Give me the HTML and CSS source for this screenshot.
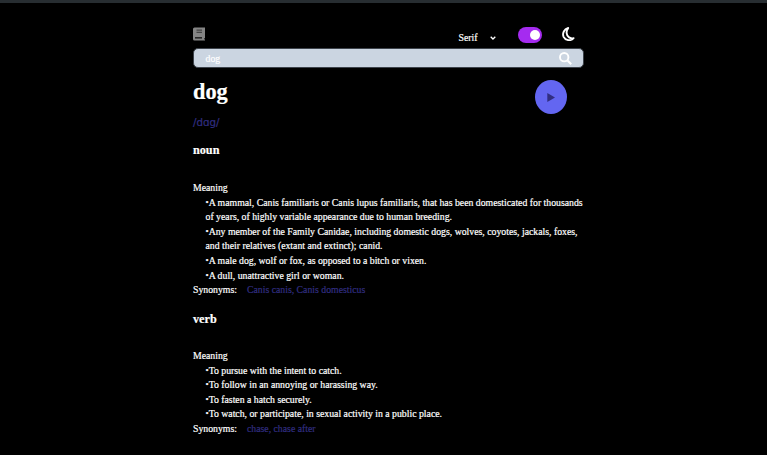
FILE: index.html
```html
<!DOCTYPE html>
<html lang="en">
<head>
<meta charset="utf-8">
<title>Dictionary</title>
<link rel="stylesheet" href="styles.css">
</head>
<body>
<main class="page">
  <header class="header">
    <svg class="book" viewBox="0 0 12 14"><path fill="#858585" d="M1.500.5H12v10.600h-.6v1.400h.6v1H1.500Q0 13.500 0 12V2Q0 .5 1.500.5z"/><path fill="#454545" d="M3.500 2.500h5.500v1.300H3.500zM3.500 4.700h5.500v1.300H3.500z"/><path fill="#111" d="M2 10.200h7v1.300H2z"/></svg>
    <div class="controls">
      <span class="font-name">Serif</span>
      <svg class="chevron" viewBox="0 0 6 4"><path d="M.7.7 3 3 5.300.7" fill="none" stroke="#fff" stroke-width="1.300"/></svg>
      <span class="toggle"><span class="knob"></span></span>
      <svg class="moon" viewBox="0 0 13 14"><path d="M6.200 1C3.700 3.800 4.300 8.600 7 10.400c1.500 1 3 1.200 4.600.7C8.700 14.500 3.300 13.400 1.600 9.800.1 6.300 2.100 2 6.200 1z" fill="none" stroke="#fff" stroke-width="1.900" stroke-linejoin="round"/></svg>
    </div>
  </header>
  <div class="search">
    <span>dog</span>
    <svg class="magnifier" viewBox="0 0 13 13"><circle cx="5.200" cy="5.200" r="4.200" fill="none" stroke="#fff" stroke-width="1.900"/><path d="m8.300 8.300 3.900 3.900" stroke="#fff" stroke-width="2.100"/></svg>
  </div>
  <section class="entry">
    <div>
      <h1 class="word">dog</h1>
      <p class="phonetic">/dɑg/</p>
    </div>
    <div class="play"><svg viewBox="0 0 8 9"><path d="M.3 0v9L8 4.500z" fill="#312e81"/></svg></div>
  </section>
  <section class="part">
    <h2 class="kind">noun</h2>
    <p class="label">Meaning</p>
    <ul class="meanings">
      <li><span class="line">A mammal, Canis familiaris or Canis lupus familiaris, that has been domesticated for thousands</span><span class="line cont">of years, of highly variable appearance due to human breeding.</span></li>
      <li><span class="line">Any member of the Family Canidae, including domestic dogs, wolves, coyotes, jackals, foxes,</span><span class="line cont">and their relatives (extant and extinct); canid.</span></li>
      <li><span class="line">A male dog, wolf or fox, as opposed to a bitch or vixen.</span></li>
      <li><span class="line">A dull, unattractive girl or woman.</span></li>
    </ul>
    <p class="synonyms"><span>Synonyms:</span><span class="links">Canis canis, Canis domesticus</span></p>
  </section>
  <section class="part">
    <h2 class="kind">verb</h2>
    <p class="label">Meaning</p>
    <ul class="meanings">
      <li><span class="line">To pursue with the intent to catch.</span></li>
      <li><span class="line">To follow in an annoying or harassing way.</span></li>
      <li><span class="line">To fasten a hatch securely.</span></li>
      <li><span class="line">To watch, or participate, in sexual activity in a public place.</span></li>
    </ul>
    <p class="synonyms"><span>Synonyms:</span><span class="links">chase, chase after</span></p>
  </section>
</main>
</body>
</html>
```
FILE: styles.css
```css
* { box-sizing: border-box; margin: 0; padding: 0; }
html { background: #000; overflow: hidden; }
body { background: #000; color: #fff; border-top: 3px solid #272d31; font: 9.780px/14.600px "Liberation Serif", serif; -webkit-text-stroke: .2px; height: 455px; overflow: hidden; }
svg { display: block; flex: none; }
.page { width: 391px; margin-left: 193px; padding-top: 22px; }
.header { display: flex; justify-content: space-between; height: 24px; padding: 2px 9px 0 0; }
.book { width: 12px; height: 14px; }
.controls { display: flex; align-items: flex-start; }
.font-name { width: 31.500px; padding-top: 4px; }
.chevron { width: 6px; height: 4px; margin: 9px 22px 0 0; }
.toggle { display: flex; justify-content: flex-end; align-items: center; width: 24px; height: 16px; margin-right: 20px; padding-right: 2px; border-radius: 8px; background: #a52bf0; }
.knob { width: 10px; height: 10px; border-radius: 50%; background: #fff; }
.moon { width: 13px; height: 14px; }
.search { display: flex; justify-content: space-between; align-items: center; height: 20px; margin-top: -1px; padding: 1px 11px 0 11.500px; border: 1px solid #3d434b; border-radius: 5px; background: #cbd5e1; }
.search span { padding-top: 1px; }
.magnifier { width: 13px; height: 13px; }
.entry { display: flex; justify-content: space-between; height: 74px; padding: 12px 17px 0 0; }
.word { font-size: 22.300px; line-height: 23px; }
.phonetic { margin-top: 11px; color: #312e81; font: 10.300px/16px "DejaVu Sans", sans-serif; }
.play { display: flex; align-items: center; justify-content: center; width: 32px; height: 34px; border-radius: 50%; background: #6366f1; }
.play svg { width: 8px; height: 9px; }
.part { height: 168.500px; }
.kind { font-size: 12.200px; line-height: 17px; }
.part + .part .label { margin-top: 21.600px; }
.label { margin-top: 22px; }
.meanings { list-style: none; padding-left: 12.500px; }
.line { display: block; width: max-content; }
.line:not(.cont)::before { content: "•"; font-size: 9px; line-height: 1px; vertical-align: 1px; }
.synonyms { display: flex; gap: 10px; }
.links { color: #312e81; }
```
